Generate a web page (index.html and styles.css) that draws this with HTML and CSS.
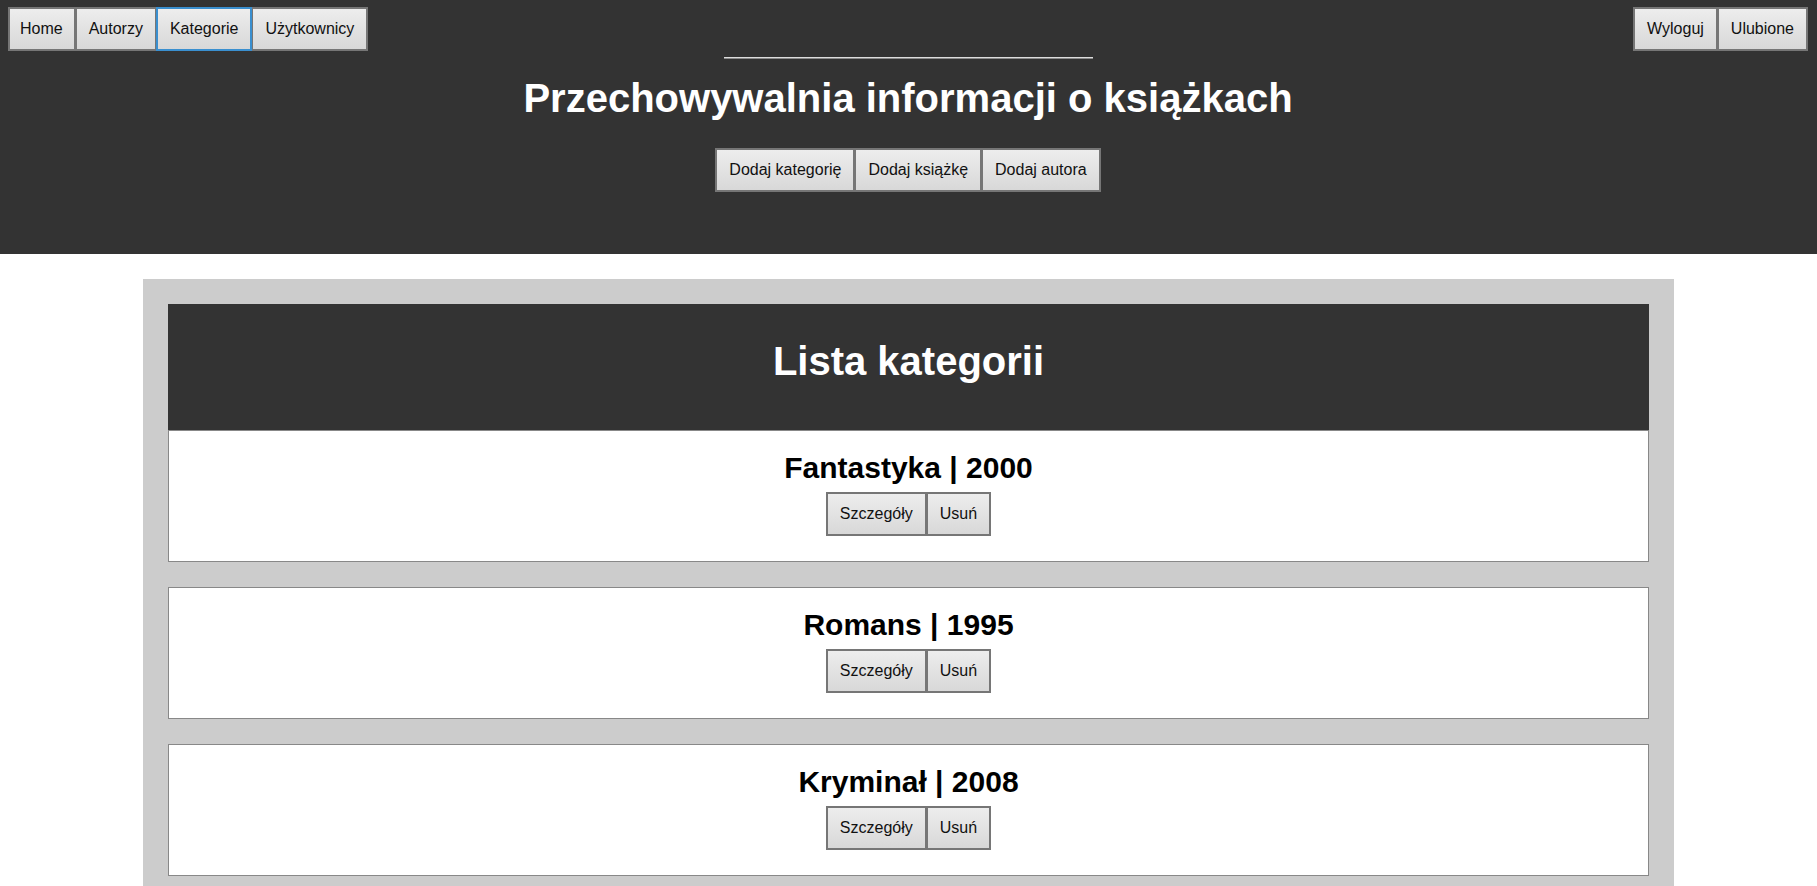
FILE: index.html
```html
<!DOCTYPE html>
<html lang="pl">
<head>
<meta charset="utf-8">
<title>Przechowywalnia informacji o książkach</title>
<link rel="stylesheet" href="styles.css">
</head>
<body>
<header class="site-header">
  <nav class="topnav">
    <div class="btn-group">
      <button class="btn btn-home">Home</button>
      <button class="btn">Autorzy</button>
      <button class="btn btn-focus">Kategorie</button>
      <button class="btn">Użytkownicy</button>
    </div>
    <div class="btn-group">
      <button class="btn">Wyloguj</button>
      <button class="btn">Ulubione</button>
    </div>
  </nav>
  <hr class="rule">
  <h1 class="site-title">Przechowywalnia informacji o książkach</h1>
  <div class="btn-group actions">
    <button class="btn">Dodaj kategorię</button>
    <button class="btn">Dodaj książkę</button>
    <button class="btn">Dodaj autora</button>
  </div>
</header>

<main class="panel">
  <div class="panel-head">
    <h2 class="panel-title">Lista kategorii</h2>
  </div>
  <section class="card first">
    <h3 class="card-title">Fantastyka | 2000</h3>
    <div class="btn-group">
      <button class="btn">Szczegóły</button>
      <button class="btn">Usuń</button>
    </div>
  </section>
  <section class="card">
    <h3 class="card-title">Romans | 1995</h3>
    <div class="btn-group">
      <button class="btn">Szczegóły</button>
      <button class="btn">Usuń</button>
    </div>
  </section>
  <section class="card">
    <h3 class="card-title">Kryminał | 2008</h3>
    <div class="btn-group">
      <button class="btn">Szczegóły</button>
      <button class="btn">Usuń</button>
    </div>
  </section>
</main>
</body>
</html>
```

FILE: styles.css
```css
* {
  box-sizing: border-box;
}

html, body {
  margin: 0;
  padding: 0;
  background: #ffffff;
  font-family: "Liberation Sans", Arial, sans-serif;
}

.site-header {
  background: #333333;
  padding: 7px 9px 62px 8px;
  display: flex;
  flex-direction: column;
  align-items: center;
}

.topnav {
  width: 100%;
  display: flex;
  justify-content: space-between;
  align-items: flex-start;
}

.btn-group {
  display: flex;
  justify-content: center;
}

.btn {
  font-family: "Liberation Sans", Arial, sans-serif;
  font-size: 16px;
  line-height: 20px;
  color: #111111;
  padding: 10px 12px;
  margin: 0;
  border: 2px solid #767676;
  border-radius: 0;
  background: linear-gradient(#ededed, #d8d8d8);
  cursor: pointer;
}

.btn + .btn {
  margin-left: -1px;
}

.btn-home {
  padding-left: 10px;
  padding-right: 11px;
}

.btn-focus {
  border-color: #3a8fcf;
  position: relative;
  z-index: 1;
}

.rule {
  width: 369px;
  height: 0;
  margin: 6px 0 0;
  border: 0;
  border-top: 1px solid #dddddd;
  border-bottom: 1px solid #8a8a8a;
}

.site-title {
  margin: 16px 0 0;
  font-size: 40px;
  line-height: 46px;
  font-weight: bold;
  color: #ffffff;
  text-align: center;
}

.actions {
  margin-top: 27px;
}

.panel {
  width: 84.26%;
  margin: 25px auto 0;
  background: #cccccc;
  padding: 25px;
}

.panel-head {
  background: #333333;
  padding: 34px 0 46px;
  text-align: center;
}

.panel-title {
  margin: 0;
  font-size: 40px;
  line-height: 46px;
  font-weight: bold;
  color: #ffffff;
}

.card {
  background: #ffffff;
  border: 1px solid #888888;
  padding: 20px 0 25px;
  margin-top: 25px;
  display: flex;
  flex-direction: column;
  align-items: center;
}

.card.first {
  margin-top: 0;
}

.card-title {
  margin: 0 0 7px;
  font-size: 30px;
  line-height: 34px;
  font-weight: bold;
  color: #000000;
  text-align: center;
}
```
